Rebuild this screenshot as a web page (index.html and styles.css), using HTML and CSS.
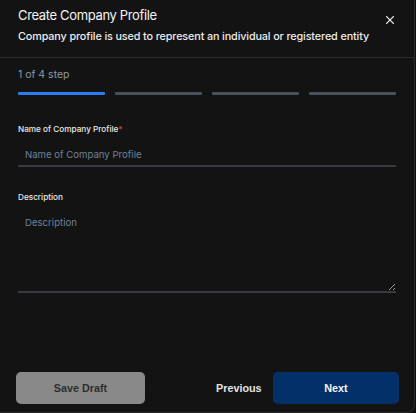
FILE: index.html
```html
<!DOCTYPE html>
<html lang="en">
<head>
<meta charset="utf-8">
<title>Create Company Profile</title>
<link rel="stylesheet" href="styles.css">
</head>
<body>
<div class="modal">
  <header class="modal-header">
    <div class="titles">
      <h1 class="title">Create Company Profile</h1>
      <p class="subtitle">Company profile is used to represent an individual or registered entity</p>
    </div>
    <button class="close" aria-label="Close">
      <svg width="8" height="8" viewBox="0 0 8 8"><path d="M0.6 0.6L7.4 7.4M7.4 0.6L0.6 7.4" stroke="#ececec" stroke-width="1.3" stroke-linecap="round"/></svg>
    </button>
  </header>
  <section class="body">
    <div class="step-label">1 of 4 step</div>
    <div class="steps">
      <span class="step active"></span>
      <span class="step"></span>
      <span class="step"></span>
      <span class="step"></span>
    </div>
    <div class="field first">
      <label class="label">Name of Company Profile<span class="req">*</span></label>
      <input class="input" type="text" placeholder="Name of Company Profile">
    </div>
    <div class="field second">
      <label class="label">Description</label>
      <textarea class="textarea" placeholder="Description"></textarea>
    </div>
  </section>
  <footer class="footer">
    <button class="btn btn-draft">Save Draft</button>
    <div class="nav">
      <button class="btn btn-prev">Previous</button>
      <button class="btn btn-next">Next</button>
    </div>
  </footer>
</div>
</body>
</html>
```

FILE: styles.css
```css
* { box-sizing: border-box; }
html, body { margin: 0; padding: 0; background: #0d0d0d; }
body { font-family: Inter, "Noto Sans", sans-serif; color: #eee; }

.modal {
  width: 415px;
  height: 413px;
  background: #131313;
  border-right: 1px solid #2a2a2a;
  border-bottom: 1px solid #2a2a2a;
  border-radius: 0 0 8px 0;
  display: flex;
  flex-direction: column;
}

.modal-header {
  display: flex;
  justify-content: space-between;
  align-items: flex-start;
  padding: 7px 18px 0 18px;
  height: 58px;
  border-bottom: 1px solid #2b2b2b;
}
.titles { flex: 1; min-width: 0; }
.title {
  margin: 0;
  font-size: 13px;
  line-height: 16px;
  font-weight: 400;
  letter-spacing: -0.35px;
  color: #f4f4f4;
}
.subtitle {
  margin: 7px 0 0 0;
  font-size: 10.8px;
  line-height: 14px;
  font-weight: 500;
  letter-spacing: -0.12px;
  color: #ececec;
  white-space: nowrap;
}
.close {
  background: none;
  border: 0;
  padding: 0;
  margin-top: 8.5px;
  margin-right: 2px;
  width: 8px;
  height: 8px;
  display: flex;
  align-items: center;
  justify-content: center;
}

.body {
  padding: 10px 18px 0 18px;
  flex: 1;
}
.step-label {
  font-size: 10.5px;
  line-height: 14px;
  color: #8d99a8;
}
.steps {
  display: grid;
  grid-template-columns: repeat(4, 1fr);
  gap: 10px;
  margin-top: 10px;
}
.step {
  height: 3px;
  border-radius: 1px;
  background: #4b5159;
}
.step.active { background: #2d7cf2; }

.field.first { margin-top: 28px; }
.field.second { margin-top: 24px; }
.label {
  display: block;
  font-size: 8.2px;
  line-height: 12px;
  font-weight: 500;
  color: #e8e8e8;
}
.req { color: #e23b3b; }
.input, .textarea {
  display: block;
  width: 100%;
  background: transparent;
  border: 0;
  border-bottom: 2px solid #373a3f;
  color: #ddd;
  font-family: Inter, "Noto Sans", sans-serif;
  font-size: 9.6px;
  line-height: 14px;
  padding: 0 7px;
  margin: 0;
  outline: none;
}
.input { height: 32px; padding-top: 8px; }
.textarea {
  height: 90px;
  padding-top: 13px;
  resize: vertical;
}
.input::placeholder, .textarea::placeholder { color: #70819a; }

.footer {
  display: flex;
  justify-content: space-between;
  align-items: center;
  padding: 0 15px 8px 16px;
}
.btn {
  font-family: "Liberation Sans", Arial, sans-serif;
  font-weight: 700;
  font-size: 10.8px;
  border: 0;
  height: 32px;
  border-radius: 5px;
  cursor: pointer;
}
.btn-draft {
  width: 129px;
  background: #898989;
  color: #2e2e2e;
}
.nav { display: flex; align-items: center; gap: 13px; }
.btn-prev {
  background: none;
  color: #e2e2e2;
  padding: 0;
  width: 44px;
}
.btn-next {
  width: 126px;
  background: #04306a;
  color: #f4f4f4;
}
```
